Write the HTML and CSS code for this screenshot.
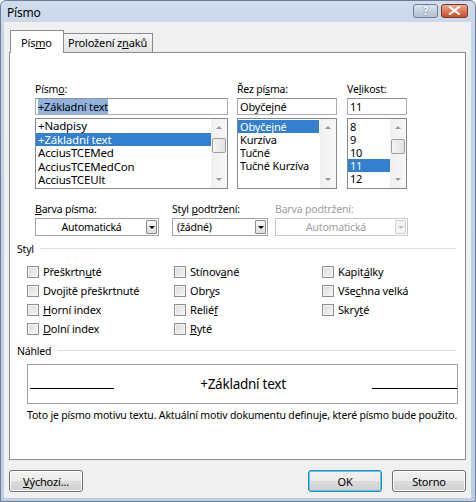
FILE: index.html
```html
<!DOCTYPE html>
<html lang="cs">
<head>
<meta charset="utf-8">
<title>Písmo</title>
<link rel="stylesheet" href="styles.css">
</head>
<body>
<div class="window">
  <div class="titlebar">
    <span class="title">Písmo</span>
    <div class="tbtns">
      <span class="tbtn help">?</span>
      <span class="tbtn close"><svg width="13" height="9" viewBox="0 0 13 9"><path d="M2 1 L11 8 M11 1 L2 8" stroke="#fff" stroke-width="2.2" stroke-linecap="square"/></svg></span>
    </div>
  </div>
  <div class="client">
    <div class="tabs">
      <div class="tab active">Pís<u>m</u>o</div>
      <div class="tab">Proložení z<u>n</u>aků</div>
    </div>
    <div class="panel">
      <div class="fontsec">
        <div class="fcol col-font">
          <div class="lbl">Písm<u>o</u>:</div>
          <div class="input"><span class="seltext">+Základní text</span></div>
          <div class="list big">
            <div class="items">
              <div class="item">+Nadpisy</div>
              <div class="item sel">+Základní text</div>
              <div class="item">AcciusTCEMed</div>
              <div class="item">AcciusTCEMedCon</div>
              <div class="item">AcciusTCEUlt</div>
            </div>
            <div class="sbar"><span class="up"></span><span class="thumb t1"></span><span class="dn"></span></div>
          </div>
        </div>
        <div class="fcol col-style">
          <div class="lbl">Řez pí<u>s</u>ma:</div>
          <div class="input">Obyčejné</div>
          <div class="list">
            <div class="items">
              <div class="item sel short">Obyčejné</div>
              <div class="item">Kurzíva</div>
              <div class="item">Tučné</div>
              <div class="item">Tučné Kurzíva</div>
            </div>
            <div class="sbar"><span class="up"></span><span class="dn"></span></div>
          </div>
        </div>
        <div class="fcol col-size">
          <div class="lbl">Ve<u>l</u>ikost:</div>
          <div class="input">11</div>
          <div class="list">
            <div class="items">
              <div class="item">8</div>
              <div class="item">9</div>
              <div class="item">10</div>
              <div class="item sel">11</div>
              <div class="item">12</div>
            </div>
            <div class="sbar"><span class="up"></span><span class="thumb t2"></span><span class="dn"></span></div>
          </div>
        </div>
      </div>

      <div class="colorsec">
        <div class="ccol c1">
          <div class="lbl"><u>B</u>arva písma:</div>
          <div class="combo center"><span class="cval">Automatická</span><span class="cbtn"></span></div>
        </div>
        <div class="ccol c2">
          <div class="lbl">Styl <u>p</u>odtržení:</div>
          <div class="combo"><span class="cval">(žádné)</span><span class="cbtn"></span></div>
        </div>
        <div class="ccol c3 disabled">
          <div class="lbl">Barva podtržení:</div>
          <div class="combo center"><span class="cval">Automatická</span><span class="cbtn"></span></div>
        </div>
      </div>

      <div class="legend legend-styl"><span>Styl</span><span class="rule"></span></div>
      <div class="checks">
        <label class="chk"><span class="box"></span>Přeškrtn<u>u</u>té</label>
        <label class="chk"><span class="box"></span>Stínov<u>a</u>né</label>
        <label class="chk"><span class="box"></span>Kapit<u>á</u>lky</label>
        <label class="chk"><span class="box"></span>Dvo<u>j</u>itě přeškrtnuté</label>
        <label class="chk"><span class="box"></span>Obr<u>y</u>s</label>
        <label class="chk"><span class="box"></span>Vše<u>c</u>hna velká</label>
        <label class="chk"><span class="box"></span><u>H</u>orní index</label>
        <label class="chk"><span class="box"></span>Relié<u>f</u></label>
        <label class="chk"><span class="box"></span>Skry<u>t</u>é</label>
        <label class="chk"><span class="box"></span><u>D</u>olní index</label>
        <label class="chk"><span class="box"></span><u>R</u>yté</label>
      </div>

      <div class="legend legend-nahled"><span>Náhled</span><span class="rule"></span></div>
      <div class="preview">
        <span class="pline left"></span>
        <span class="ptext">+Základní text</span>
        <span class="pline right"></span>
      </div>
      <div class="desc">Toto je písmo motivu textu. Aktuální motiv dokumentu definuje, které písmo bude použito.</div>
    </div>
    <div class="buttons">
      <span class="btn"><u>V</u>ýchozí...</span>
      <span class="spacer"></span>
      <span class="btn default">OK</span>
      <span class="btn">Storno</span>
    </div>
  </div>
</div>
</body>
</html>
```

FILE: styles.css
```css
* { box-sizing: border-box; }
html, body { margin: 0; padding: 0; }
body {
  width: 476px;
  height: 502px;
  overflow: hidden;
  background: #fff;
  font-family: "Noto Sans", "DejaVu Sans", sans-serif;
  font-size: 10.5px;
  letter-spacing: -0.18px;
  color: #000;
}
u { text-decoration: underline; text-underline-offset: 1px; }

.window {
  width: 476px;
  height: 502px;
  background: linear-gradient(#d0ddee, #c3d3e8 40px, #bccde4);
  border: 1px solid #6c7f96;
  border-radius: 6px 6px 0 0;
  display: flex;
  flex-direction: column;
}
.titlebar {
  height: 21px;
  display: flex;
  align-items: center;
  padding-left: 6px;
  padding-right: 7px;
}
.title { font-size: 12px; flex: 1; padding-top: 1px; }
.tbtns { display: flex; gap: 3px; margin-top: -2px; }
.tbtn {
  height: 14px;
  border: 1px solid #6f7f94;
  border-radius: 3px;
  display: flex;
  align-items: center;
  justify-content: center;
}
.help {
  width: 25px;
  background: linear-gradient(#dfe7f1, #c3cfdd 50%, #b2c1d3);
  color: #fff;
  font-weight: bold;
  font-size: 12px;
  text-shadow: 0 0 1px #5c6f88, 0 0 1px #5c6f88;
}
.close {
  width: 27px;
  background: linear-gradient(#eeaa90, #de7757 50%, #c94f2d);
  border-color: #7a3a2a;
}

.client {
  margin: 0 4px 3px 3px;
  flex: 1;
  background: #f0f0f0;
  display: flex;
  flex-direction: column;
}
.tabs {
  display: flex;
  align-items: flex-end;
  padding-top: 8px;
  padding-left: 6px;
  height: 30px;
  position: relative;
  z-index: 1;
}
.tab {
  height: 19px;
  width: 89px;
  border: 1px solid #898c95;
  border-left: none;
  border-bottom: none;
  background: linear-gradient(#f6f6f6, #e2e2e2);
  padding-left: 4px;
  line-height: 17px;
  font-size: 11px;
}
.tab.active {
  height: 23px;
  width: 54px;
  margin-bottom: -1px;
  border-left: 1px solid #898c95;
  background: #fff;
  padding-left: 10px;
  line-height: 24px;
}

.panel {
  margin-left: 5px;
  width: 457px;
  height: 408px;
  border: 1px solid #898c95;
  background: #fff;
  display: flex;
  flex-direction: column;
}

.lbl { height: 15px; line-height: 15px; white-space: nowrap; }

.fontsec {
  display: flex;
  padding: 29px 0 0 25px;
}
.col-font { width: 193px; }
.col-style { width: 100px; margin-left: 9px; }
.col-size { width: 60px; margin-left: 10px; }

.input {
  margin-top: 1px;
  height: 17px;
  border: 1px solid #abadb3;
  border-top-color: #8e9096;
  background: #fff;
  padding: 0 2px;
  line-height: 15px;
  white-space: nowrap;
  font-size: 11px;
}
.seltext { background: #8fb3de; }

.list {
  margin-top: 3px;
  height: 71px;
  border: 1px solid #828790;
  display: flex;
  background: #fff;
}
.items { flex: 1; padding-top: 1px; overflow: hidden; }
.item { height: 13px; line-height: 13px; padding-left: 2px; white-space: nowrap; font-size: 11px; }
.list.big .items { padding-top: 0; }
.list.big .item { height: 13.6px; line-height: 13.6px; font-size: 11.5px; }
.item.sel { background: #3280d0; color: #fff; }
.item.short { margin-right: 1px; }

.sbar {
  width: 16px;
  background: linear-gradient(90deg, #f0f0f0, #f7f7f7);
  position: relative;
}
.up, .dn {
  position: absolute;
  left: 5px;
  width: 0;
  height: 0;
  border-left: 3px solid transparent;
  border-right: 3px solid transparent;
}
.up { top: 7px; border-bottom: 3px solid #9a9a9a; }
.dn { bottom: 7px; border-top: 3px solid #9a9a9a; }
.thumb {
  position: absolute;
  left: 1px;
  width: 14px;
  height: 15px;
  border: 1px solid #a0a0a0;
  border-radius: 2px;
  background: linear-gradient(90deg, #f4f4f4, #e2e2e2);
}
.t1 { top: 19px; }
.t2 { top: 20px; }

.colorsec {
  display: flex;
  margin-top: 13px;
  padding-left: 25px;
}
.c1 { width: 124px; }
.c2 { width: 96px; margin-left: 13px; }
.c3 { width: 133px; margin-left: 7px; }
.combo {
  margin-top: 1px;
  height: 18px;
  border: 1px solid #a5a5a5;
  background: #fff;
  display: flex;
  align-items: center;
  padding: 1px;
}
.cval { flex: 1; padding-left: 3px; white-space: nowrap; }
.combo.center .cval { text-align: center; padding-left: 0; }
.cbtn {
  width: 11px;
  height: 14px;
  border: 1px solid #8a8a8a;
  border-radius: 1px;
  background: linear-gradient(#f6f6f6, #dedede);
  position: relative;
}
.cbtn::after {
  content: "";
  position: absolute;
  left: 2px;
  top: 5px;
  border-left: 3px solid transparent;
  border-right: 3px solid transparent;
  border-top: 3px solid #000;
}
.disabled { color: #a0a0a0; }
.disabled .combo { border-color: #c8c8c8; }
.disabled .cbtn { border-color: #d0d0d0; background: #f4f4f4; }
.disabled .cbtn::after { border-top-color: #c0c0c0; }

.legend {
  display: flex;
  align-items: center;
  padding-left: 7px;
  padding-right: 9px;
  height: 15px;
}
.legend .rule { flex: 1; height: 1px; background: #d5dfe5; margin-left: 6px; }
.legend-styl { margin-top: 5px; }
.legend-nahled { margin-top: 5px; }

.checks {
  margin-top: 6px;
  padding-left: 17px;
  display: grid;
  grid-template-columns: 147px 148px 120px;
  grid-auto-rows: 19px;
}
.chk { display: flex; align-items: center; white-space: nowrap; font-size: 11px; }
.box {
  width: 12px;
  height: 12px;
  border: 1px solid #8f8f8f;
  background: linear-gradient(135deg, #dcdcdc, #f4f4f4);
  box-shadow: inset 0 0 0 1px #f4f4f4;
  margin-right: 4px;
}

.preview {
  margin-top: 6px;
  margin-left: 17px;
  width: 431px;
  height: 40px;
  border: 1px solid #a0a0a0;
  display: flex;
  align-items: center;
  padding: 0 0 0 2px;
}
.pline { height: 1px; background: #000; margin-top: 9px; }
.pline.left { width: 84px; }
.pline.right { width: 85px; }
.ptext { flex: 1; text-align: center; font-size: 13.5px; letter-spacing: -0.25px; }
.desc { margin-top: 4px; margin-left: 17px; height: 15px; line-height: 15px; white-space: nowrap; }

.buttons {
  display: flex;
  margin-top: 10px;
  padding: 0 5px;
  gap: 10px;
}
.spacer { flex: 1; }
.btn {
  width: 74px;
  height: 22px;
  border: 1px solid #707070;
  border-radius: 3px;
  background: linear-gradient(#f2f2f2, #ebebeb 50%, #dddddd 50%, #cfcfcf);
  box-shadow: inset 0 0 0 1px #fbfbfb;
  display: flex;
  align-items: center;
  justify-content: center;
  font-size: 11px;
}
.btn.default {
  border-color: #3c7fb1;
  box-shadow: inset 0 0 0 1px #48d0f8;
}
```
